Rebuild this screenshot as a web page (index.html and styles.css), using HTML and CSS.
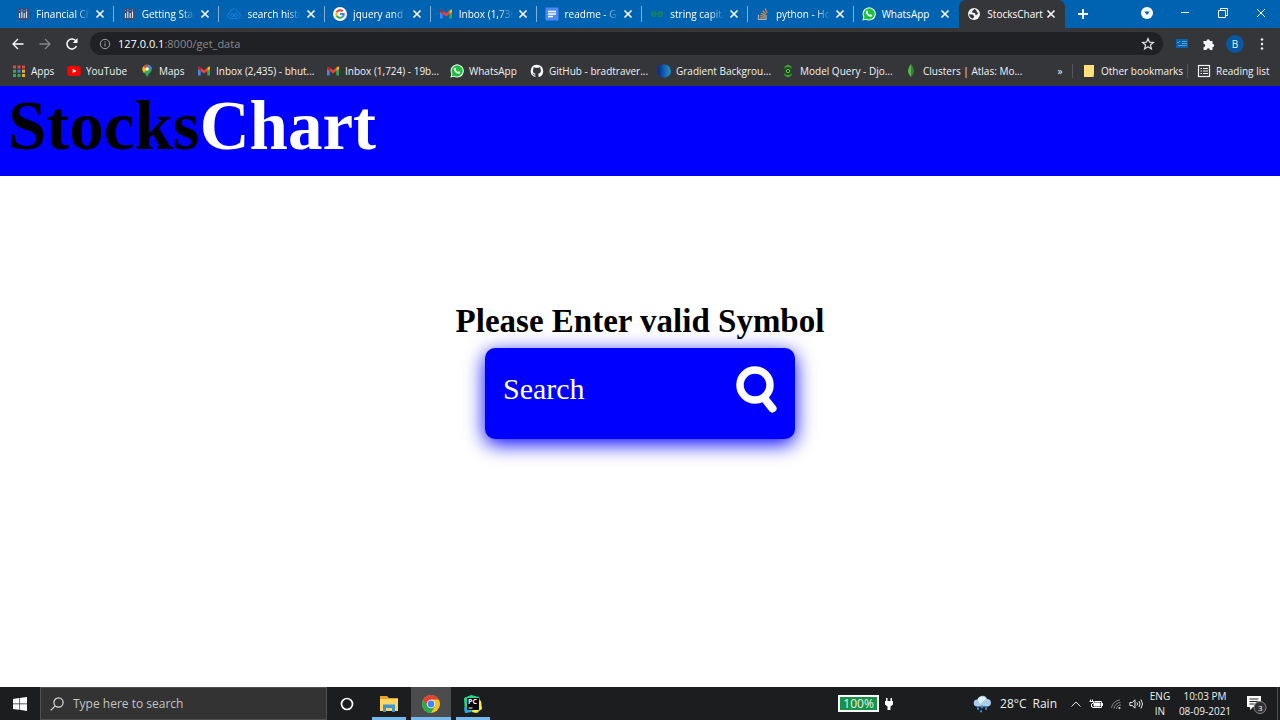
FILE: index.html
```html
<!DOCTYPE html>
<html lang="en">
<head>
<meta charset="utf-8">
<meta name="viewport" content="width=device-width, initial-scale=1">
<title>StocksChart</title>
<link rel="stylesheet" href="styles.css">
</head>
<body>
<svg class="defs" aria-hidden="true">
  <symbol id="close" viewBox="0 0 12 12"><path d="M2.500 2.500l7 7m0-7l-7 7" stroke="#fff" stroke-width="1.600" fill="none"/></symbol>
  <symbol id="plotly" viewBox="0 0 14 14"><rect x="1" y="1" width="12" height="12" rx="1" fill="#34507f"/><path d="M3.500 6v5M5.800 4.500V11M8.200 6v5M10.500 4.500V11" stroke="#e4e8f4" stroke-width="1.100"/><path d="M3.500 3v1M8.200 3v1" stroke="#f58"/><path d="M5.800 2.500v1M10.500 2.500v1" stroke="#6cc9e8"/></symbol>
  <symbol id="gmail" viewBox="0 0 14 14"><path d="M1 3v8.500h2.700V6L1 3z" fill="#4285f4"/><path d="M13 3v8.500h-2.700V6z" fill="#34a853"/><path d="M10.300 3.700L12 2.500q1-.2 1 1v1.500l-2.700 2z" fill="#fbbc04"/><path d="M3.700 3.700L7 6.300l3.300-2.600V7L7 9.500 3.700 7z" fill="#ea4335"/><path d="M3.700 3.700L2 2.500q-1-.2-1 1v1.500l2.700 2z" fill="#c5221f"/></symbol>
  <symbol id="whatsapp" viewBox="0 0 14 14"><path d="M.4 13.600l1-3.500A6.600 6.600 0 1 1 4 12.700z" fill="#fff"/><path d="M1.600 12.400l.8-2.500A5.600 5.600 0 1 1 4.200 11.700z" fill="#18c43c"/><path d="M4.600 3.700c.6-.4 1-.3 1.200.3l.4 1-.5.8c.5 1 1.200 1.700 2.200 2.100l.8-.7 1.500.7c.2 1-.4 1.700-1.500 1.800-2.500-.1-5-2.700-4.900-4.900z" fill="#fff"/></symbol>
</svg>

<header class="browser">
  <nav class="tabs" aria-label="Tabs">
    <div class="tablist">
      <div class="tab"><svg class="ico"><use href="#plotly"/></svg><span>Financial Ch</span><button aria-label="Close tab"><svg><use href="#close"/></svg></button></div>
      <div class="tab"><svg class="ico"><use href="#plotly"/></svg><span>Getting Star</span><button aria-label="Close tab"><svg><use href="#close"/></svg></button></div>
      <div class="tab"><svg class="ico" viewBox="0 0 14 14" fill="none" stroke="#1683e0"><path d="M3.500 11.500a3 3 0 0 1-.5-5.900C3.500 1 9 .8 10 4.500c4 .5 4.300 6.500.5 7z"/><circle cx="5.300" cy="8" r="1.600"/><circle cx="8.700" cy="8" r="1.600"/></svg><span>search histo</span><button aria-label="Close tab"><svg><use href="#close"/></svg></button></div>
      <div class="tab"><svg class="ico" viewBox="0 0 14 14" fill="none" stroke-width="2"><circle cx="7" cy="7" r="7" fill="#fff"/><path d="M9.700 4.300A3.800 3.800 0 0 0 3.700 5.200" stroke="#ea4335"/><path d="M3.700 5.200a3.800 3.800 0 0 0 0 3.600" stroke="#fbbc05"/><path d="M3.700 8.800a3.800 3.800 0 0 0 5.700 1.200" stroke="#34a853"/><path d="M9.400 10a3.800 3.800 0 0 0 1.400-3H7" stroke="#4285f4"/></svg><span>jquery and c</span><button aria-label="Close tab"><svg><use href="#close"/></svg></button></div>
      <div class="tab"><svg class="ico"><use href="#gmail"/></svg><span>Inbox (1,736</span><button aria-label="Close tab"><svg><use href="#close"/></svg></button></div>
      <div class="tab"><svg class="ico" viewBox="0 0 14 14"><rect x=".5" y=".5" width="13" height="13" rx="1" fill="#4c8bf5"/><path d="M3 4.500h8M3 7h8M3 9.500h5" stroke="#fff" stroke-width="1.300"/></svg><span>readme - Go</span><button aria-label="Close tab"><svg><use href="#close"/></svg></button></div>
      <div class="tab"><svg class="ico" viewBox="0 0 14 14" fill="none" stroke="#15825b" stroke-width="1.500"><path d="M1 7h12M6 5.500Q2 3 1.500 7 2 11 6 8.500M8 5.500q4-2.500 4.500 1.500-.5 4-4.500 1.500"/></svg><span>string capita</span><button aria-label="Close tab"><svg><use href="#close"/></svg></button></div>
      <div class="tab"><svg class="ico" viewBox="0 0 14 14" fill="none"><path d="M2.500 8v4.500h7.500V8" stroke="#a9b5bd" stroke-width="1.200"/><path d="M4 10.800h4.800M4.200 8.600l4.700.7M5 6.200l4.400 1.900M6.600 3.700L10 6.900M9 1.500l2.200 4.200" stroke="#e28a43" stroke-width="1.200"/></svg><span>python - Ho</span><button aria-label="Close tab"><svg><use href="#close"/></svg></button></div>
      <div class="tab"><svg class="ico"><use href="#whatsapp"/></svg><span class="whole">WhatsApp</span><button aria-label="Close tab"><svg><use href="#close"/></svg></button></div>
      <div class="tab active"><svg class="ico" viewBox="0 0 14 14"><circle cx="7" cy="7" r="6" fill="#f1f3f4"/><path d="M7.500 1.800L5 4.500l.5 1.200L8 6l.5 2 1.500-.3 1.400-1.900L10 5.500l-.5-1.700zM2 7.200l3.500.3 1.700 1.600-.4 1.400-1.500 1.200C3.200 10.500 2.200 9 2 7.200z" fill="#35363a"/></svg><span class="whole">StocksChart</span><button aria-label="Close tab"><svg><use href="#close"/></svg></button></div>
    </div>
    <button class="newtab" aria-label="New tab"><svg width="12" height="12"><path d="M6 1v10M1 6h10" stroke="#fff" stroke-width="1.800"/></svg></button>
    <div class="window-buttons">
      <button aria-label="Search tabs"><svg width="14" height="14"><circle cx="7" cy="7" r="6" fill="#fff"/><path d="M4.200 5.500h5.600L7 9z" fill="#0063b1"/></svg></button>
      <button aria-label="Minimize"><svg width="10" height="10"><path d="M1 4.500h8" stroke="#fff"/></svg></button>
      <button aria-label="Restore"><svg width="10" height="10" fill="none" stroke="#fff"><path d="M.5 2.500h7v7h-7zM2.500 2.500v-2h7v7h-2"/></svg></button>
      <button aria-label="Close window"><svg width="10" height="10"><path d="M1 1l8 8m0-8L1 9" stroke="#fff"/></svg></button>
    </div>
  </nav>

  <div class="toolbar">
    <button aria-label="Back"><svg width="14" height="14" fill="none" stroke="#fff" stroke-width="1.300"><path d="M12.500 7H2M7 2L2 7l5 5"/></svg></button>
    <button aria-label="Forward"><svg width="14" height="14" fill="none" stroke="#85868a" stroke-width="1.300"><path d="M1.500 7H12M7 2l5 5-5 5"/></svg></button>
    <button aria-label="Reload"><svg width="14" height="14" fill="none" stroke="#fff" stroke-width="1.500"><path d="M11.500 9A5 5 0 1 1 11 4"/><path d="M12.500 1v5H7.800z" fill="#fff" stroke="none"/></svg></button>
    <div class="address">
      <svg width="12" height="12" fill="none" stroke="#a4a6aa"><circle cx="6" cy="6" r="4.700"/><path d="M6 5.300v3.200M6 3.200v1.200"/></svg>
      <span class="url"><b>127.0.0.1</b>:8000/get_data</span>
      <button aria-label="Bookmark this page"><svg width="14" height="14" fill="none" stroke="#dfe1e5" stroke-width="1.200"><path d="M7 1.600l1.500 3.600 3.900.3-3 2.500 1 3.900L7 9.800l-3.400 2.100 1-3.900-3-2.500 3.900-.3z"/></svg></button>
    </div>
    <div class="actions">
      <button aria-label="Task extension"><svg width="14" height="12"><rect x="1" y="1" width="12" height="9" fill="#0763ae"/><path d="M2 4l1 1 2-2M7 3.500h5M7 5.500h5M3 7.500h9" stroke="#5b9bd0" fill="none"/></svg></button>
      <button aria-label="Extensions"><svg width="14" height="14"><path d="M1.500 4H4.500a1.700 1.700 0 1 1 3.400 0H10.500v2.800a1.700 1.700 0 1 1 0 3.400V13H8a1.700 1.700 0 0 0-3.400 0H1.500v-2.800a1.700 1.700 0 0 0 0-3.400z" fill="#f1f3f4"/></svg></button>
      <button class="avatar">B</button>
      <button aria-label="Menu"><svg width="14" height="14" fill="#f1f3f4"><circle cx="7" cy="2.500" r="1.200"/><circle cx="7" cy="7" r="1.200"/><circle cx="7" cy="11.500" r="1.200"/></svg></button>
    </div>
  </div>

  <nav class="bookmarks" aria-label="Bookmarks">
    <a href="#"><svg class="ico" viewBox="0 0 14 14"><path d="M1 3h3M5.500 3h3M10 3h3" stroke="#dc4b43" stroke-width="3"/><path d="M1 7.300h3" stroke="#36a853" stroke-width="3"/><path d="M5.500 7.300h3" stroke="#3f83dd" stroke-width="3"/><path d="M10 7.300h3M10 11.600h3" stroke="#e9ad29" stroke-width="3"/><path d="M1 11.600h3M5.500 11.600h3" stroke="#36a853" stroke-width="3"/></svg>Apps</a>
    <a href="#"><svg class="ico" viewBox="0 0 14 14"><rect x=".3" y="2" width="13.400" height="10" rx="2.500" fill="#f00"/><path d="M5.700 4.800v4.400L9.500 7z" fill="#fff"/></svg>YouTube</a>
    <a href="#"><svg class="ico" viewBox="0 0 14 14"><path d="M2.500 5.200A4.600 4.600 0 0 1 11.700 5.200C11.700 8 8.500 9.500 7.100 13.300 6 9.500 2.500 8 2.500 5.200z" fill="#34a853"/><path d="M3.500 2.300L7 5 3.800 8.900Q1 5 3.500 2.300z" fill="#fbbc04"/><path d="M3.500 2.300L6 5.300 8.700.9Q5.500 0 3.500 2.300z" fill="#ea4335"/><path d="M8.700.9Q12 2.200 11.700 5L9 4.500 7 3.500z" fill="#4285f4"/><circle cx="7.100" cy="5" r="1.700" fill="#fff"/></svg>Maps</a>
    <a href="#"><svg class="ico"><use href="#gmail"/></svg>Inbox (2,435) - bhut...</a>
    <a href="#"><svg class="ico"><use href="#gmail"/></svg>Inbox (1,724) - 19b...</a>
    <a href="#"><svg class="ico"><use href="#whatsapp"/></svg>WhatsApp</a>
    <a href="#"><svg class="ico" viewBox="0 0 16 16"><path fill="#fff" d="M8 .8a7.200 7.200 0 0 0-2.300 14c.4.100.5-.2.500-.4v-1.300c-2 .4-2.500-.9-2.500-.9-.3-.8-.8-1-.8-1-.7-.5 0-.5 0-.5.700.1 1.100.8 1.100.8.700 1.100 1.700.8 2.100.6.1-.5.300-.8.500-1-1.600-.2-3.300-.8-3.300-3.600 0-.8.300-1.400.7-1.900-.1-.2-.3-.9.100-1.900 0 0 .6-.2 2 .7a7 7 0 0 1 3.600 0c1.400-.9 2-.7 2-.7.400 1 .1 1.700.1 1.900.4.500.7 1.100.7 1.900 0 2.800-1.700 3.400-3.300 3.600.3.200.5.700.5 1.300v2c0 .2.100.5.500.4A7.200 7.200 0 0 0 8 .8z"/></svg>GitHub - bradtraver...</a>
    <a href="#"><svg class="ico" viewBox="0 0 14 14"><defs><linearGradient id="ball"><stop offset=".1" stop-color="#05308f"/><stop offset="1" stop-color="#2596ce"/></linearGradient></defs><circle cx="7" cy="7" r="6.800" fill="url(#ball)"/></svg>Gradient Backgrou...</a>
    <a href="#"><svg class="ico" viewBox="0 0 14 14"><path d="M7 .5l3.500 2V5h-7V2.500zM3.500 9h7v2.500L7 13.500l-3.500-2z" fill="#439f38"/><circle cx="7" cy="7" r="4" fill="#14521a"/><circle cx="7" cy="7" r="1.700" fill="#25262a" stroke="#70c658"/></svg>Model Query - Djo...</a>
    <a href="#"><svg class="ico" viewBox="0 0 14 14"><path d="M7 0Q1 7 7 13z" fill="#58b947"/><path d="M7 0Q13 7 7 13z" fill="#2e8439"/></svg>Clusters | Atlas: Mo...</a>
    <button class="more" aria-label="More bookmarks">»</button>
    <a href="#" class="split"><svg class="ico" viewBox="0 0 14 14"><path d="M2 1h10v9l-1 3H2z" fill="#ffe17b"/><path d="M10 13l2-3v3z" fill="#eeb729"/></svg>Other bookmarks</a>
    <a href="#" class="split"><svg class="ico" viewBox="0 0 14 14" fill="none" stroke="#f1f3f4" stroke-width="1.200"><rect x="1.500" y="1.500" width="11" height="11"/><path d="M3.500 4.500H5M6 4.500h5M3.500 7H5M6 7h5M3.500 9.500H5M6 9.500h5"/></svg>Reading list</a>
  </nav>
</header>

<div class="page">
  <header class="banner"><h1>Stocks<span>Chart</span></h1></header>
  <main>
    <h2>Please Enter valid Symbol</h2>
    <form class="search">
      <input type="text" placeholder="Search" aria-label="Search">
      <button aria-label="Submit search"><svg width="44" height="50" fill="none" stroke="#fff"><circle cx="20" cy="20" r="15" stroke-width="7.500"/><path d="M29.500 33.500L37.500 43.500" stroke-width="8" stroke-linecap="round"/></svg></button>
    </form>
  </main>
</div>

<footer class="taskbar">
  <button class="start" aria-label="Start"><svg width="14" height="14" fill="#fff"><path d="M0 2l6-.9v5.500H0zM6.600 1L14 0v6.600H6.600zM0 7.200h6v5.500L0 11.900zM6.600 7.200H14V14l-7.400-1.200z"/></svg></button>
  <label class="find"><svg width="14" height="14" fill="none" stroke="#dedede" stroke-width="1.200"><circle cx="8.500" cy="5.500" r="4.600"/><path d="M5.300 8.800L.7 13.400"/></svg><input type="text" placeholder="Type here to search" aria-label="Type here to search"></label>
  <div class="apps">
    <button aria-label="Cortana"><svg width="14" height="14"><circle cx="7" cy="7" r="5.500" fill="none" stroke="#fff" stroke-width="1.700"/></svg></button>
    <button class="open" aria-label="File Explorer"><svg width="20" height="18"><path d="M1 1h7l2 2h9v13H1z" fill="#e5a524"/><path d="M1 4h18v12H1z" fill="#ffd665"/><path d="M4 17V9.500h12V17h-3v-4H7v4z" fill="#3d94cf"/></svg></button>
    <button class="open current" aria-label="Chrome"><svg width="20" height="20"><circle cx="10" cy="10" r="9" fill="#fbc116"/><path d="M2.200 5.500A9 9 0 0 0 10 19l4-7-4-2z" fill="#2da94f"/><path d="M2.200 5.500L6 12l4-6.500h7.800A9 9 0 0 0 2.200 5.500z" fill="#e34133"/><circle cx="10" cy="10" r="4.300" fill="#fff"/><circle cx="10" cy="10" r="3.400" fill="#4384f4"/></svg></button>
    <button class="open" aria-label="PyCharm"><svg width="20" height="20"><path d="M1 4l7-3 8 2 2 6-3 10-6-2-7 2z" fill="#22d889"/><path d="M13 5l5 2 1 8-6 4-4-1z" fill="#f6ee45"/><path d="M1 14l4-1 4 5-7 1z" fill="#1baee0"/><rect x="4" y="4" width="12" height="12"/><text x="5" y="10">PC</text><path d="M5.500 14h4" stroke="#fff"/></svg></button>
  </div>
  <div class="tray">
    <span class="charge">100%</span>
    <svg class="plug" width="10" height="14" fill="#fff"><path d="M2 1h1.500v3h3V1H8v3h1v3.500L6.500 9.500V13h-3V9.500L1 7.500V4h1z"/></svg>
    <svg class="weather" width="20" height="18"><path d="M4 11.500a3.500 3.500 0 0 1 .5-7C6-.3 13-.3 14 4a3.800 3.800 0 0 1 1 7.500z" fill="#aacdf0"/><path d="M4.500 5C6 .8 11 .8 13 4L7 9z" fill="#e3f1ff"/><path d="M5 13v1M9 11v1.500M13 13v1M8 16v.5" stroke="#3290e3" stroke-width="2" stroke-linecap="round"/></svg>
    <span class="temp">28°C</span><span class="rain">Rain</span>
    <svg class="glyph" width="14" height="14" fill="none" stroke="#e8e8e8"><path d="M2.500 9.500L7 5l4.500 4.500"/></svg>
    <svg class="glyph" width="14" height="14" fill="none" stroke="#fff"><path d="M3.500 9.500v1h9v-6h-7M13.500 6v3M1.500 2.500v2M3.500 2.500v2M.5 4.500h4v1.500l-2 1v3"/><path d="M5 6h6v3H5z" fill="#fff"/></svg>
    <svg class="glyph" width="14" height="14" fill="none" stroke="#858585"><path d="M2.500 11A9 9 0 0 1 11 3M5 11.500A6.500 6.500 0 0 1 11.500 5.500M7.500 12A4 4 0 0 1 12 8"/><circle cx="10.500" cy="11" r="1" fill="#ddd" stroke="none"/></svg>
    <svg class="glyph" width="14" height="14" fill="none" stroke="#e8e8e8"><path d="M.8 5.500h2.400L6 2.800v8.400L3.200 8.500H.8zM8 5.500q1.200 1.500 0 3M10 4q2.200 3 0 6M12 2.500q3 4.500 0 9"/></svg>
    <span class="lang">ENG<br>IN</span>
    <span class="clock">10:03 PM<br>08-09-2021</span>
    <button class="notes" aria-label="Notifications"><svg width="20" height="20"><path d="M0 2h14v11H6l-3 3v-3H0z" fill="#fff"/><path d="M2.500 5h9M2.500 7.500h9M2.500 10h5" stroke="#222"/><circle cx="13" cy="13.500" r="6" fill="#303030" stroke="#888"/><text x="11" y="17">3</text></svg></button>
  </div>
</footer>
</body>
</html>
```
FILE: styles.css
```css
* { box-sizing: border-box; }
body {
  margin: 0;
  min-height: 100vh;
  display: flex;
  flex-direction: column;
  background: #fff;
  font-family: "Liberation Serif", serif;
}
button {
  border: 0;
  padding: 0;
  background: none;
  color: inherit;
  font: inherit;
  display: flex;
  align-items: center;
  justify-content: center;
}
svg { flex: none; display: block; }
input { border: 0; padding: 0; background: none; min-width: 0; outline: 0; }
a { color: inherit; text-decoration: none; }
.defs { position: absolute; width: 0; height: 0; }
.ico { width: 14px; height: 14px; }

.browser {
  background: #35363a;
  color: #f1f3f4;
  font: 10px/14px "Open Sans", "Noto Sans", sans-serif;
}
.tabs {
  display: flex;
  height: 28px;
  padding-left: 8px;
  background: #0063b1;
  color: #fff;
}
.tablist { display: flex; flex: 0 1 1057px; min-width: 0; }
.tab {
  flex: 1 1 0;
  min-width: 0;
  display: flex;
  align-items: center;
  padding: 0 8px;
  background: linear-gradient(#7eb0d8, #7eb0d8) right center / 1px 16px no-repeat;
}
.tab span {
  flex: 1;
  min-width: 0;
  margin-left: 6px;
  margin-right: -8px;
  white-space: nowrap;
  mask-image: linear-gradient(90deg, #000 60%, transparent 82%);
}
.tab .whole { mask-image: none; }
.tab button svg { width: 12px; height: 12px; }
.tab:nth-child(9) { background: none; }
.tab.active { background: #35363a; border-radius: 7px 7px 0 0; }
.newtab { width: 36px; }
.window-buttons { margin-left: auto; display: flex; height: 26px; }
.window-buttons button { width: 38px; }

.toolbar {
  display: flex;
  align-items: center;
  height: 31px;
  padding-left: 11px;
  gap: 13px;
}
.address {
  flex: 1;
  display: flex;
  align-items: center;
  height: 23px;
  margin-left: -2px;
  padding: 0 8px 0 9px;
  gap: 7px;
  border-radius: 12px;
  background: #202124;
  color: #898b8f;
  font-size: 11px;
}
.url { flex: 1; }
.url b { font-weight: 400; color: #fff; }
.actions { display: flex; align-items: center; padding-right: 5px; margin-left: -8px; }
.actions button { width: 27px; }
.actions .avatar { width: 18px; height: 18px; margin: 0 4px; border-radius: 9px; background: #0757a1; }

.bookmarks {
  display: grid;
  grid-template-columns: 55px 73px 57px 129px 124px 80px 127px 124px 123px 1fr 24px 115px 87px;
  align-items: center;
  height: 27px;
  padding: 0 6px 4px 12px;
}
.bookmarks a { display: flex; align-items: center; gap: 5px; white-space: nowrap; }
.bookmarks .split { border-left: 1px solid #55565a; padding-left: 9px; }

.page { flex: 1; display: flex; flex-direction: column; }
.banner { height: 90px; padding: 0 8px; background: #00f; }
.banner h1 { margin: 0; font-size: 69px; line-height: 80px; color: #000; }
.banner span { color: #fff; }
main { display: flex; flex-direction: column; align-items: center; padding-top: 125px; }
h2 { margin: 0 0 7px; font-size: 33px; line-height: 40px; color: #000; }
.search {
  display: flex;
  align-items: flex-start;
  width: 310px;
  height: 91px;
  padding: 17px 16px 0 18px;
  border-radius: 10px;
  background: #00f;
  box-shadow: 0 5px 20px #00f;
}
.search input { flex: 1; height: 48px; font: 30px "Liberation Serif", serif; color: #fff; }
.search input::placeholder { color: #fff; opacity: 1; }

.taskbar {
  display: flex;
  height: 33px;
  background: #1b1d1f;
  color: #f0f0f0;
  font: 12px/15px "Open Sans", "Noto Sans", sans-serif;
}
.start { width: 40px; }
.find {
  display: flex;
  align-items: center;
  width: 287px;
  padding-left: 9px;
  gap: 9px;
  border: 1px solid #505050;
  background: #333;
}
.find input { flex: 1; font: inherit; }
.find input::placeholder { color: #c4c4c4; opacity: 1; }
.apps { display: flex; gap: 2px; }
.apps button { width: 40px; }
.apps .open { background: linear-gradient(#76b9ed, #76b9ed) center bottom / 34px 3px no-repeat; }
.apps .current { background-color: #4b4c4e; background-size: 40px 3px; }
.apps text { font: bold 7px "Open Sans", sans-serif; fill: #fff; }
.tray {
  margin: 0 2px 0 auto;
  display: flex;
  align-items: center;
  padding-right: 10px;
  border-right: 1px solid #505050;
}
.charge {
  width: 41px;
  border: 2px solid #fff;
  background: #159447;
  text-align: center;
  line-height: 13px;
}
.plug { margin: 0 79px 0 5px; }
.weather { margin-right: 7px; }
.temp { margin-right: 6px; }
.rain { margin-right: 12px; }
.glyph { margin-right: 6px; }
.lang, .clock { font-size: 10px; text-align: center; white-space: nowrap; }
.lang { width: 22px; }
.clock { width: 68px; }
.notes { margin-left: 8px; }
.notes text { font: 8px "Open Sans", sans-serif; fill: #fff; }
```
